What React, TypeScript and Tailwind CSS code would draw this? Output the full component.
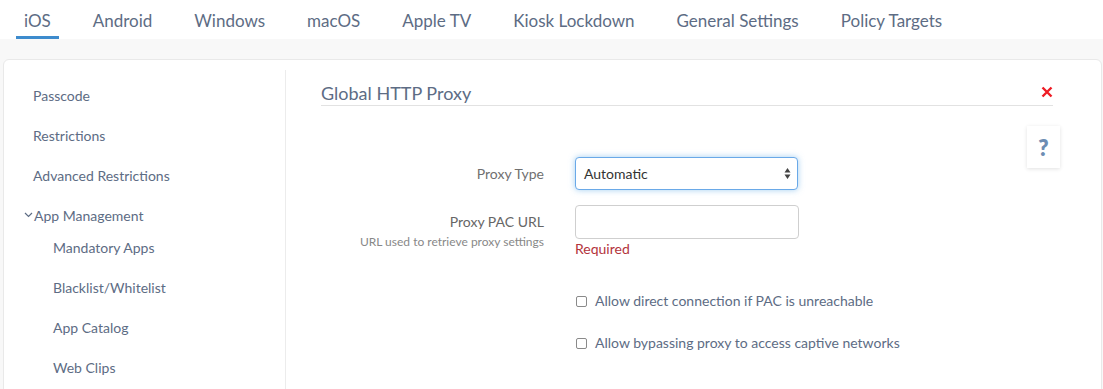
import { ReactNode } from 'react';

const tabs = ['iOS', 'Android', 'Windows', 'macOS', 'Apple TV', 'Kiosk Lockdown', 'General Settings', 'Policy Targets'];

function NavItem({ children, sub }: { children: ReactNode; sub?: boolean }) {
  return (
    <div className={`flex h-10 items-center text-[14px] text-[#5d6c84] ${sub ? 'pl-[49px]' : 'pl-[29px]'}`}>
      {children}
    </div>
  );
}

function Checkbox({ label }: { label: string }) {
  return (
    <label className="flex h-5 items-center gap-2 text-[14px] leading-5 text-[#5d6c84]">
      <span className="ml-px h-[11px] w-[11px] rounded-[2px] border border-[#8a8a8a] bg-white" />
      {label}
    </label>
  );
}

export default function App() {
  return (
    <div className="min-h-screen bg-[#f8f8f8] font-['Lato',sans-serif]">
      <nav className="flex h-[39px] gap-[26px] bg-white pl-4">
        {tabs.map((t, i) => (
          <div
            key={t}
            className={`px-2 pt-[9px] pb-[3px] text-[17px] leading-6 text-[#5d6c84] border-b-[3px] ${
              i === 0 ? 'border-[#3d8bcd]' : 'border-transparent'
            }`}
          >
            {t}
          </div>
        ))}
      </nav>

      <div className="pt-5 pr-px pl-[3px]">
        <div className="flex min-h-[340px] rounded-t-md border border-[#e9e9e9] bg-white">
          <aside className="mt-[10px] w-[282px] shrink-0 border-r border-[#ececec] pt-[5px]">
            <NavItem>Passcode</NavItem>
            <NavItem>Restrictions</NavItem>
            <NavItem>Advanced Restrictions</NavItem>
            <div className="flex h-8 items-center pt-2 pl-5 text-[14px] text-[#5d6c84]">
              <svg width="9" height="6" viewBox="0 0 9 6" className="mr-px" fill="none">
                <path d="M1 1l3.5 3.5L8 1" stroke="#5d6c84" strokeWidth="1.2" />
              </svg>
              App Management
            </div>
            <NavItem sub>Mandatory Apps</NavItem>
            <NavItem sub>Blacklist/Whitelist</NavItem>
            <NavItem sub>App Catalog</NavItem>
            <NavItem sub>Web Clips</NavItem>
          </aside>

          <main className="flex-1 pt-[22px] pr-[41px] pl-[35px]">
            <div className="mr-[7px] flex items-center justify-between border-b border-[#e2e2e2] pb-px">
              <h2 className="text-[18px] leading-[22px] text-[#5d6c84]">Global HTTP Proxy</h2>
              <svg width="12" height="12" viewBox="0 0 12 12" className="mt-[-2px]">
                <path d="M1.5 1.5l9 9M10.5 1.5l-9 9" stroke="#ee1c25" strokeWidth="2.4" />
              </svg>
            </div>

            <div className="mt-5 flex">
              <div className="flex-1 pt-[31px]">
                <div className="flex items-center gap-[31px]">
                  <div className="w-[223px] text-right text-[14px] text-[#707070]">Proxy Type</div>
                  <div className="flex h-[33px] w-[223px] items-center justify-between rounded-[4px] border border-[#6aa9e8] bg-white pr-[6px] pl-2 text-[14px] text-[#333] shadow-[0_0_6px_rgba(102,175,233,0.6)]">
                    Automatic
                    <svg width="7" height="13" viewBox="0 0 7 13">
                      <path d="M3.5 1L6.5 5.5H0.5Z M3.5 12L0.5 7.5H6.5Z" fill="#444" />
                    </svg>
                  </div>
                </div>

                <div className="mt-[15px] flex gap-[31px]">
                  <div className="w-[223px] pt-2 text-right">
                    <div className="text-[14px] leading-[18px] text-[#666]">Proxy PAC URL</div>
                    <div className="mt-[3px] text-[12px] leading-4 text-[#888]">URL used to retrieve proxy settings</div>
                  </div>
                  <div>
                    <div className="h-[34px] w-[224px] rounded-[4px] border border-[#cfcfcf] bg-white" />
                    <div className="text-[14px] leading-5 text-[#b3343c]">Required</div>
                  </div>
                </div>

                <div className="mt-[32px] ml-[254px] flex flex-col gap-[22px]">
                  <Checkbox label="Allow direct connection if PAC is unreachable" />
                  <Checkbox label="Allow bypassing proxy to access captive networks" />
                </div>
              </div>

              <div className="flex h-[42px] w-[33px] items-center justify-center bg-white text-[22px] font-extrabold text-[#6d8db3] shadow-[0_1px_4px_rgba(0,0,0,0.12)]">
                ?
              </div>
            </div>
          </main>
        </div>
      </div>
    </div>
  );
}
